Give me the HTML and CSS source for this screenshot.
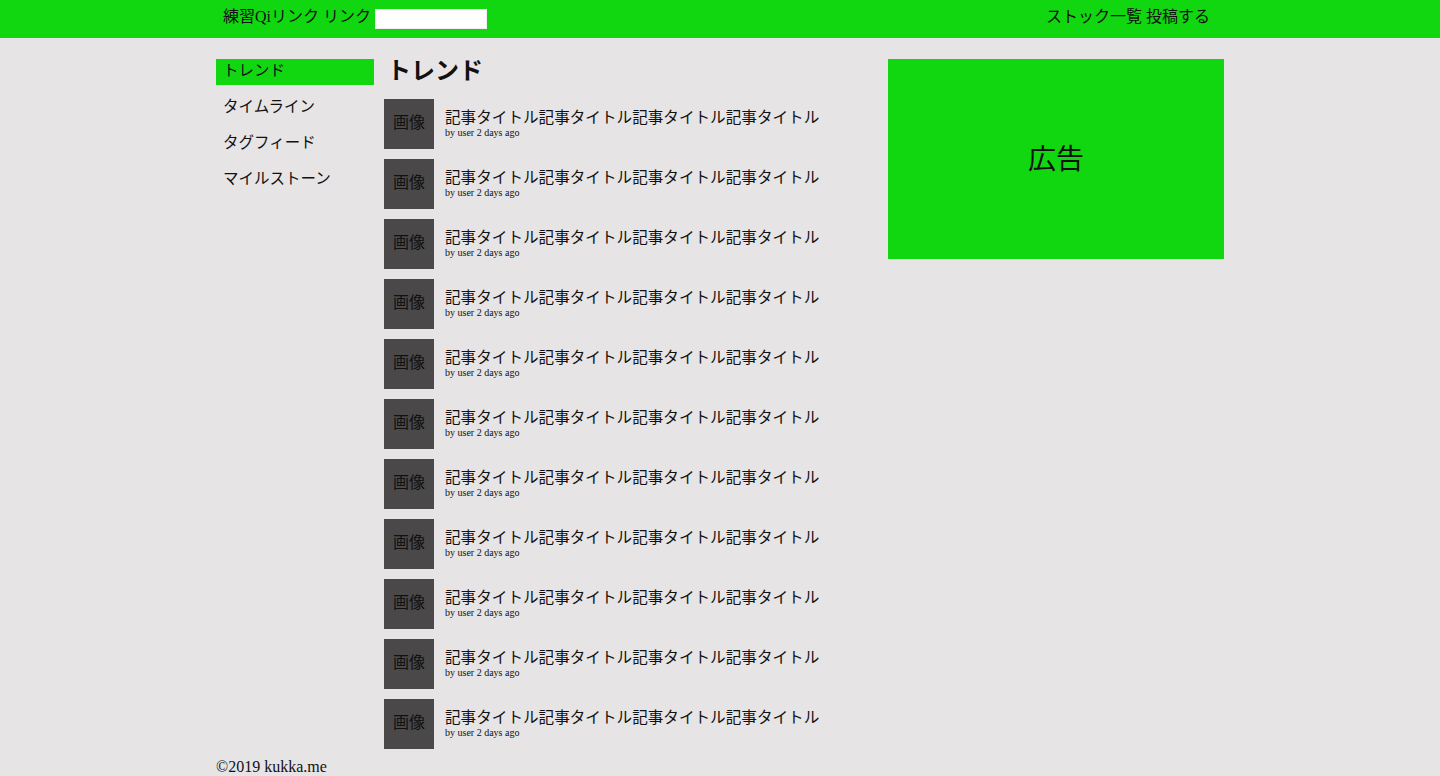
FILE: index.html
```html
<!DOCTYPE html>
<html lang="ja">
<head>
<meta charset="utf-8">
<title>練習Qi</title>
<link rel="stylesheet" href="styles.css">
</head>
<body>
<header class="topbar">
  <div class="topbar-inner">
    <div class="topbar-left">
      <span class="brand">練習Qiリンク リンク</span>
      <input class="search" type="text">
    </div>
    <div class="topbar-right">
      <span>ストック一覧 投稿する</span>
    </div>
  </div>
</header>
<div class="page">
  <nav class="sidebar">
    <div class="nav-item active">トレンド</div>
    <div class="nav-item">タイムライン</div>
    <div class="nav-item">タグフィード</div>
    <div class="nav-item">マイルストーン</div>
  </nav>
  <main class="main">
    <h1 class="heading">トレンド</h1>
    <ul class="articles">
      <li class="article"><div class="thumb">画像</div><div class="info"><div class="title">記事タイトル記事タイトル記事タイトル記事タイトル</div><div class="meta">by user 2 days ago</div></div></li>
      <li class="article"><div class="thumb">画像</div><div class="info"><div class="title">記事タイトル記事タイトル記事タイトル記事タイトル</div><div class="meta">by user 2 days ago</div></div></li>
      <li class="article"><div class="thumb">画像</div><div class="info"><div class="title">記事タイトル記事タイトル記事タイトル記事タイトル</div><div class="meta">by user 2 days ago</div></div></li>
      <li class="article"><div class="thumb">画像</div><div class="info"><div class="title">記事タイトル記事タイトル記事タイトル記事タイトル</div><div class="meta">by user 2 days ago</div></div></li>
      <li class="article"><div class="thumb">画像</div><div class="info"><div class="title">記事タイトル記事タイトル記事タイトル記事タイトル</div><div class="meta">by user 2 days ago</div></div></li>
      <li class="article"><div class="thumb">画像</div><div class="info"><div class="title">記事タイトル記事タイトル記事タイトル記事タイトル</div><div class="meta">by user 2 days ago</div></div></li>
      <li class="article"><div class="thumb">画像</div><div class="info"><div class="title">記事タイトル記事タイトル記事タイトル記事タイトル</div><div class="meta">by user 2 days ago</div></div></li>
      <li class="article"><div class="thumb">画像</div><div class="info"><div class="title">記事タイトル記事タイトル記事タイトル記事タイトル</div><div class="meta">by user 2 days ago</div></div></li>
      <li class="article"><div class="thumb">画像</div><div class="info"><div class="title">記事タイトル記事タイトル記事タイトル記事タイトル</div><div class="meta">by user 2 days ago</div></div></li>
      <li class="article"><div class="thumb">画像</div><div class="info"><div class="title">記事タイトル記事タイトル記事タイトル記事タイトル</div><div class="meta">by user 2 days ago</div></div></li>
      <li class="article"><div class="thumb">画像</div><div class="info"><div class="title">記事タイトル記事タイトル記事タイトル記事タイトル</div><div class="meta">by user 2 days ago</div></div></li>
    </ul>
  </main>
  <aside class="aside">
    <div class="ad">広告</div>
  </aside>
</div>
<footer class="footer">©2019 kukka.me</footer>
</body>
</html>
```
FILE: styles.css
```css
html, body {
  margin: 0;
  padding: 0;
}
body {
  background: #e6e4e5;
  color: #111;
  font-family: "Liberation Serif", "Noto Sans CJK JP", serif;
  font-size: 16px;
}
.topbar {
  background: #11d711;
  height: 38px;
}
.topbar-inner {
  width: 1008px;
  margin: 0 auto;
  height: 38px;
  display: flex;
  align-items: flex-start;
  justify-content: space-between;
  box-sizing: border-box;
  padding: 6px 14px 0 7px;
  line-height: 22px;
}
.topbar-left {
  display: flex;
  align-items: flex-start;
  font-size: 16px;
}
.search {
  margin: 3px 0 0 4px;
  width: 112px;
  height: 20px;
  box-sizing: border-box;
  border: 1px solid #eee;
  background: #fff;
  padding: 0;
}
.topbar-right {
  font-size: 16px;
}
.page {
  width: 1008px;
  margin: 0 auto;
  padding-top: 21px;
  display: grid;
  grid-template-columns: 158px 494px 336px;
  column-gap: 10px;
  align-items: start;
}
.sidebar {
  display: flex;
  flex-direction: column;
  gap: 10px;
}
.nav-item {
  height: 26px;
  line-height: 24px;
  padding-left: 7px;
  font-size: 15.5px;
}
.nav-item.active {
  background: #11d711;
}
.heading {
  margin: 0 0 10px 3px;
  font-size: 24px;
  line-height: 24px;
  height: 30px;
  font-weight: bold;
}
.articles {
  list-style: none;
  margin: 0;
  padding: 0;
  display: flex;
  flex-direction: column;
  gap: 10px;
}
.article {
  display: flex;
  align-items: flex-start;
  gap: 11px;
}
.thumb {
  width: 50px;
  height: 50px;
  background: #4a4849;
  color: #111;
  display: flex;
  align-items: center;
  justify-content: center;
  font-size: 16px;
  line-height: 16px;
  padding-bottom: 2px;
  box-sizing: border-box;
  flex: none;
}
.info {
  padding-top: 10px;
}
.title {
  font-size: 15.6px;
  line-height: 18px;
}
.meta {
  font-size: 10px;
  line-height: 12px;
}
.ad {
  height: 200px;
  background: #11d711;
  display: flex;
  align-items: center;
  justify-content: center;
  font-size: 28px;
  padding-bottom: 5px;
  box-sizing: border-box;
}
.footer {
  width: 1008px;
  margin: 0 auto;
  padding-top: 9px;
  font-size: 16px;
  line-height: 18px;
}
```
